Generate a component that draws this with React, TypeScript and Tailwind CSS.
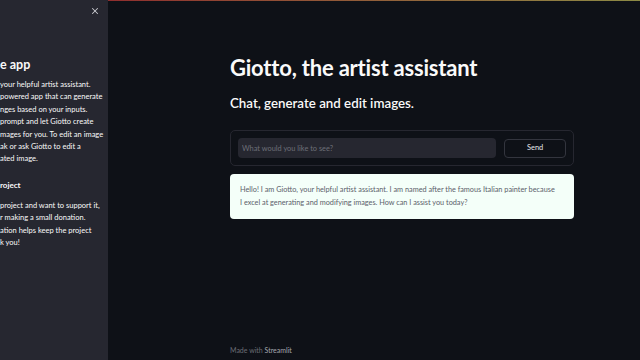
import { X } from "lucide-react"

const aboutLines = [
    "your helpful artist assistant.",
    "powered app that can generate",
    "nges based on your inputs.",
    "prompt and let Giotto create",
    "mages for you. To edit an image",
    "ak or ask Giotto to edit a",
    "ated image.",
]

const supportLines = [
    "project and want to support it,",
    "r making a small donation.",
    "ation helps keep the project",
    "k you!",
]

const Sidebar = () => {
    return (
        <aside className="w-[108px] shrink-0 h-full bg-[#262730] overflow-hidden relative text-[#fafafa]">
            <button className="absolute right-[8px] top-[6px] text-[#c9cad0]">
                <X size={10} strokeWidth={2.5} />
            </button>
            <div className="pt-[56px]">
                <h2 className="text-[12.5px] font-bold leading-[18px] whitespace-nowrap">e app</h2>
                <div className="mt-[5px] text-[7.5px] leading-[12.4px] whitespace-nowrap">
                    {aboutLines.map((line) => (
                        <p key={line}>{line}</p>
                    ))}
                </div>
                <h3 className="mt-[13px] text-[8px] font-bold leading-[12px] whitespace-nowrap">roject</h3>
                <div className="mt-[9px] text-[7.5px] leading-[12.4px] whitespace-nowrap">
                    {supportLines.map((line) => (
                        <p key={line}>{line}</p>
                    ))}
                </div>
            </div>
        </aside>
    )
}

export default function App() {
    return (
        <div
            className="w-[640px] h-[360px] flex overflow-hidden bg-[#0e1117]"
            style={{ fontFamily: "Lato, 'Noto Sans', sans-serif" }}
        >
            <Sidebar />

            <main className="flex-1 h-full flex flex-col relative">
                <div className="h-px w-full bg-gradient-to-r from-[#8f2e2e] to-[#8c8a45]" />

                <div className="flex-1 pl-[122px] pt-[53px]">
                    <div className="w-[344px] flex flex-col">
                        <h1 className="text-[22px] font-bold leading-[28px] text-[#fafafa] tracking-[-0.2px]">
                            Giotto, the artist assistant
                        </h1>
                        <h3 className="mt-[11px] text-[13.3px] font-semibold leading-[20px] text-[#fafafa]">
                            Chat, generate and edit images.
                        </h3>

                        <form
                            className="mt-[17px] h-[36px] border border-[#262730] rounded-[5px] flex items-center gap-2 px-[7px]"
                            onSubmit={(e) => e.preventDefault()}
                        >
                            <input
                                placeholder="What would you like to see?"
                                className="w-[260px] h-[20px] rounded-[4px] bg-[#262730] px-[4px] text-[7.4px] text-[#fafafa] placeholder:text-[#6d6f78] outline-none"
                            />
                            <button className="w-[62px] h-[19px] rounded-[4px] border border-[#33353e] text-[7.4px] text-[#e6e6ea]">
                                Send
                            </button>
                        </form>

                        <div className="mt-[8px] h-[45px] rounded-[4px] bg-[#f4fff9] pl-[10px] pr-[16px] pt-[9px]">
                            <p className="text-[7.3px] leading-[13px] text-[#5b5e6a]">
                                Hello! I am Giotto, your helpful artist assistant. I am named after the famous Italian painter because I excel at generating and modifying images. How can I assist you today?
                            </p>
                        </div>
                    </div>
                </div>

                <footer className="pl-[122px] pb-[5px] text-[7px] text-[#6b6d75]">
                    Made with <span className="text-[#a4a6ad]">Streamlit</span>
                </footer>
            </main>
        </div>
    )
}
